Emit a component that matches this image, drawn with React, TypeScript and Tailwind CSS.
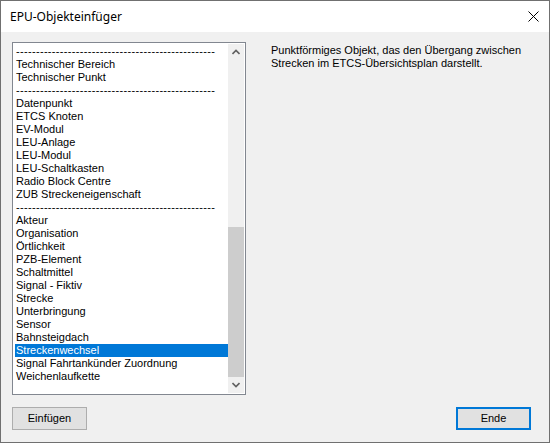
import React from "react";

const groups: string[][] = [
  ["Technischer Bereich", "Technischer Punkt"],
  [
    "Datenpunkt",
    "ETCS Knoten",
    "EV-Modul",
    "LEU-Anlage",
    "LEU-Modul",
    "LEU-Schaltkasten",
    "Radio Block Centre",
    "ZUB Streckeneigenschaft",
  ],
  [
    "Akteur",
    "Organisation",
    "Örtlichkeit",
    "PZB-Element",
    "Schaltmittel",
    "Signal - Fiktiv",
    "Strecke",
    "Unterbringung",
    "Sensor",
    "Bahnsteigdach",
    "Streckenwechsel",
    "Signal Fahrtankünder Zuordnung",
    "Weichenlaufkette",
  ],
];

const SELECTED = "Streckenwechsel";
const DASHES = "-".repeat(50);

function Separator() {
  return (
    <div className="h-[13px] leading-[13px] pl-px whitespace-nowrap tracking-[0.32px]">
      {DASHES}
    </div>
  );
}

function Row({ label }: { label: string }) {
  const sel = label === SELECTED;
  return (
    <div
      className={
        sel
          ? "h-[13px] leading-[13px] pl-px whitespace-nowrap bg-[#0078d7] text-white"
          : "h-[13px] leading-[13px] pl-px whitespace-nowrap text-black"
      }
    >
      {label}
    </div>
  );
}

function Scrollbar() {
  return (
    <div className="w-[16px] flex flex-col bg-[#f0f0f0]">
      <div className="h-[17px] flex items-center justify-center">
        <svg width="8" height="6" viewBox="0 0 8 6">
          <path d="M0.5 5 L4 1.5 L7.5 5" fill="none" stroke="#606060" strokeWidth="1.6" />
        </svg>
      </div>
      <div className="flex-1 flex flex-col">
        <div className="h-[166px]" />
        <div className="h-[150px] bg-[#cdcdcd]" />
      </div>
      <div className="h-[17px] flex items-center justify-center">
        <svg width="8" height="6" viewBox="0 0 8 6">
          <path d="M0.5 1 L4 4.5 L7.5 1" fill="none" stroke="#606060" strokeWidth="1.6" />
        </svg>
      </div>
    </div>
  );
}

export default function App() {
  return (
    <div
      className="w-[550px] h-[443px] border border-[#707070] flex flex-col text-[11px] text-black"
      style={{ fontFamily: '"Liberation Sans", Arial, sans-serif' }}
    >
      {/* title bar */}
      <div className="h-[31px] bg-white flex items-center justify-between pl-[9px] pr-[9px]">
        <span className="text-[12px]" style={{ fontFamily: '"Noto Sans", "Liberation Sans", sans-serif' }}>
          EPU-Objekteinfüger
        </span>
        <svg width="11" height="11" viewBox="0 0 11 11" className="mr-[1px]">
          <path d="M0.5 0.5 L10.5 10.5 M10.5 0.5 L0.5 10.5" stroke="#000" strokeWidth="1" />
        </svg>
      </div>

      {/* body */}
      <div className="flex-1 bg-[#f0f0f0] flex flex-col pt-[10px] pl-[11px] pr-[18px] pb-[12px]">
        <div className="flex">
          <div className="w-[234px] h-[353px] border border-[#828790] bg-white p-px flex">
            <div className="flex-1 pl-px pt-px overflow-hidden">
              {groups.map((g, i) => (
                <div key={i}>
                  <Separator />
                  {g.map((l) => (
                    <Row key={l} label={l} />
                  ))}
                </div>
              ))}
            </div>
            <Scrollbar />
          </div>
          <div className="ml-[25px] mt-[2px] leading-[13px] w-[260px]">
            Punktförmiges Objekt, das den Übergang zwischen
            <br />
            Strecken im ETCS-Übersichtsplan darstellt.
          </div>
        </div>

        <div className="mt-auto flex justify-between">
          <button className="w-[75px] h-[23px] border border-[#adadad] bg-[#e1e1e1] text-[11px] leading-none">
            Einfügen
          </button>
          <button className="w-[75px] h-[23px] border-2 border-[#0078d7] bg-[#e1e1e1] text-[11px] leading-none">
            Ende
          </button>
        </div>
      </div>
    </div>
  );
}
